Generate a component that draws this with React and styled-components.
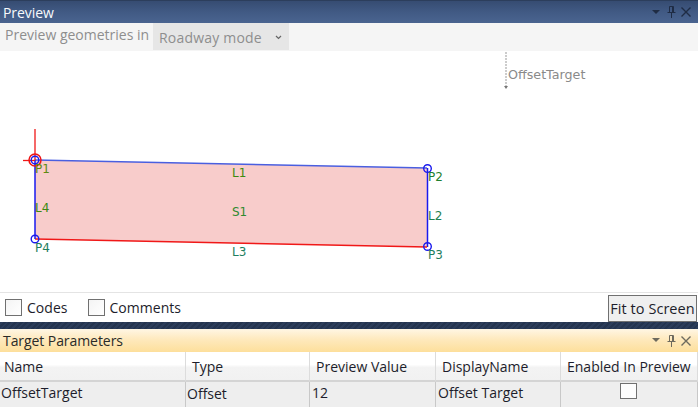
import React from "react";
import styled, { createGlobalStyle } from "styled-components";

const Global = createGlobalStyle`
  html, body { margin: 0; padding: 0; background: #2b3d5b; }
  body { font-family: "Open Sans", "Noto Sans", "Liberation Sans", sans-serif; font-size: 13px; }
  #root { width: 698px; height: 407px; overflow: hidden; }
`;

const Page = styled.div`
  width: 698px; height: 407px; display: flex; flex-direction: column; overflow: hidden;
  background: repeating-linear-gradient(135deg, #2b3c5a 0 2px, #24344f 2px 4px);
`;
const TitleBar = styled.div`
  height: 23px; flex: none; display: flex; align-items: center; justify-content: space-between;
  padding: 0 7px 0 3px; box-sizing: border-box;
  color: ${p => p.$active ? "#2a2a28" : "#f8fafd"};
  font-size: 14px; letter-spacing: -0.07px;
  background: ${p => p.$active
    ? "linear-gradient(#fff6e4 0%, #fee9bd 45%, #fddf9b 100%)"
    : "linear-gradient(#364c72 0%, #415a84 50%, #4a6490 100%)"};
  border-top: ${p => p.$active ? "0" : "1px solid #2c3e5c"};
  border-radius: ${p => p.$active ? "2px 2px 0 0" : "0"};
`;
const Title = styled.span`line-height: 1; padding-top: 1px;`;
const Controls = styled.div`display: flex; align-items: center; gap: 5px; color: ${p => p.$color};`;
const Toolbar = styled.div`
  height: 28px; flex: none; display: flex; background: #f5f5f5; color: #8e8e8e;
  font-size: 14px;
`;
const ToolLabel = styled.span`padding: 2px 0 0 5px; width: 148px; white-space: nowrap; box-sizing: border-box; line-height: 20px;`;
const Select = styled.div`
  width: 136px; height: 27px; background: #e6e6e6; display: flex; align-items: center;
  justify-content: space-between; box-sizing: border-box; padding: 2px 7px 0 6px; margin-left: 5px;
  letter-spacing: 0.2px;
`;
const Canvas = styled.div`height: 241px; flex: none; background: #fff; display: flex;`;
const Drawing = styled.svg`display: block; width: 698px; height: 241px;
  text { font-family: "DejaVu Sans", sans-serif; font-size: 12px; }
`;
const OptionsBar = styled.div`
  height: 30px; flex: none; background: #fff; border-top: 1px solid #e4e4e4; box-sizing: border-box;
  display: flex; align-items: center; padding-left: 5px; color: #1d1d2b; font-size: 14px;
`;
const Box = styled.span`
  display: inline-block; box-sizing: border-box; width: 17px; height: 17px; flex: none;
  border: 1px solid #707070; background: linear-gradient(135deg, #f4f4f4, #fff);
`;
const Option = styled.label`
  display: flex; align-items: center; gap: 5px; margin-right: 20px; line-height: 1; letter-spacing: 0.03px;
`;
const FitButton = styled.button`
  margin-left: auto; width: 89px; height: 27px; box-sizing: border-box; align-self: flex-start;
  margin-top: 2px; margin-right: 1px; padding: 0; background: #efefef; border: 1px solid #707070;
  color: #1d1d2b; font: inherit; font-size: 14.5px; letter-spacing: 0.05px;
`;
const Gap = styled.div`height: 7px; flex: none;`;
const Panel = styled.div`flex: 1; display: flex; flex-direction: column; background: #eee;`;
const Grid = styled.div`
  display: grid; grid-template-columns: 186px 124px 126px 125px 1fr; grid-template-rows: 30px 1fr; flex: 1;
  font-size: 14px; color: #1d1d2b;
`;
const Head = styled.div`
  box-sizing: border-box; padding: 1px 0 0 ${p => p.$pad}px; display: flex; align-items: center;
  background: linear-gradient(#fff 0%, #fff 45%, #f3f3f3 55%, #f1f1f1 100%);
  border-right: 1px solid #dcdcdc; border-bottom: 2px solid #d4d4d4; white-space: nowrap;
  &:last-of-type { border-right: 0; }
`;
const Cell = styled.div`
  box-sizing: border-box; padding: ${p => p.$top}px 0 0 ${p => p.$pad}px; background: #eee;
  border-right: 1px solid #c8c8c8; line-height: 20px; white-space: nowrap;
  display: flex; justify-content: ${p => p.$center ? "center" : "flex-start"}; align-items: flex-start;
`;
const EnabledBox = styled(Box)`background: #fdfdfd; height: 16px; margin-right: 2px;`;

const Menu = () => (
  <svg width="11" height="7" viewBox="0 0 11 7"><path d="M1 1h8L5 5z" fill="currentColor" /></svg>
);
const Pin = () => (
  <svg width="9" height="12" viewBox="0 0 9 12" fill="none" stroke="currentColor"><path d="M2.5.5h4v6h-4zM5.5 1v5M.5 6.5h8M4.5 7v5" /></svg>
);
const Close = () => (
  <svg width="10" height="10" viewBox="0 0 10 10" fill="none" stroke="currentColor" strokeWidth="1.4"><path d="M.5.5l9 9M9.5.5l-9 9" /></svg>
);
const Chevron = () => (
  <svg width="7" height="5" viewBox="0 0 7 5" fill="none" stroke="#666" strokeWidth="1.2"><path d="M1 1l2.5 2.5L6 1" /></svg>
);

const labels = [
  ["P1", 35, 173, "#5f8a10"], ["P2", 428, 181, "#1f7f2f"], ["P3", 428, 259, "#1f8060"], ["P4", 35, 252, "#1f8060"],
  ["L1", 232, 177, "#3c8a10"], ["L2", 428, 220, "#1f7f50"], ["L3", 232, 256, "#1f7f60"], ["L4", 35, 212, "#3c8a10"],
  ["S1", 232, 216, "#2f8a2f"],
];

const WinControls = ({ color }) => (
  <Controls $color={color}><Menu /><Pin /><Close /></Controls>
);

export default function App() {
  return (
    <Page>
      <Global />
      <TitleBar><Title>Preview</Title><WinControls color="#1f2c44" /></TitleBar>
      <Toolbar>
        <ToolLabel>Preview geometries in</ToolLabel>
        <Select>Roadway mode<Chevron /></Select>
      </Toolbar>
      <Canvas>
        <Drawing viewBox="0 51 698 241">
          <polygon points="35,160 427,168 427,247 35,239" fill="#f8cccb" />
          <line x1="35" y1="160" x2="427" y2="168" stroke="#4a5fe0" strokeWidth="1.4" />
          <line x1="427.5" y1="168" x2="427.5" y2="247" stroke="#1a1aee" strokeWidth="1.5" />
          <line x1="427" y1="247" x2="35" y2="239" stroke="#f01818" strokeWidth="1.5" />
          <line x1="35" y1="239" x2="35" y2="160" stroke="#1a1aee" strokeWidth="1.5" />
          <line x1="35" y1="129" x2="35" y2="160" stroke="#f01818" strokeWidth="1.3" />
          <line x1="23" y1="160.5" x2="35" y2="160.5" stroke="#f01818" strokeWidth="1.3" />
          <circle cx="35" cy="160" r="6" fill="none" stroke="#ee1515" strokeWidth="1.5" />
          <circle cx="35" cy="160" r="3.8" fill="none" stroke="#1a1aee" strokeWidth="1.4" />
          <circle cx="427.5" cy="168.5" r="3.8" fill="none" stroke="#1a1aee" strokeWidth="1.4" />
          <circle cx="427.5" cy="246.5" r="3.8" fill="none" stroke="#1a1aee" strokeWidth="1.4" />
          <circle cx="35" cy="239" r="3.8" fill="none" stroke="#1a1aee" strokeWidth="1.4" />
          {labels.map(([t, x, y, c]) => <text key={t} x={x} y={y} fill={c}>{t}</text>)}
          <line x1="506" y1="52" x2="506" y2="87" stroke="#999" strokeDasharray="2 1" />
          <path d="M504 86l2 3 2-3z" fill="#777" />
          <text x="508" y="79" fill="#8a8a8a" style={{ fontSize: 12.7 }}>OffsetTarget</text>
        </Drawing>
      </Canvas>
      <OptionsBar>
        <Option><Box />Codes</Option>
        <Option><Box />Comments</Option>
        <FitButton>Fit to Screen</FitButton>
      </OptionsBar>
      <Gap />
      <Panel>
        <TitleBar $active><Title>Target Parameters</Title><WinControls color="#6d6a5e" /></TitleBar>
        <Grid>
          <Head $pad={4}>Name</Head>
          <Head $pad={6}>Type</Head>
          <Head $pad={6}>Preview Value</Head>
          <Head $pad={6}>DisplayName</Head>
          <Head $pad={6}>Enabled In Preview</Head>
          <Cell $pad={1} $top={1}>OffsetTarget</Cell>
          <Cell $pad={1} $top={2}>Offset</Cell>
          <Cell $pad={2} $top={1}>12</Cell>
          <Cell $pad={2} $top={1}>Offset Target</Cell>
          <Cell $center $pad={0} $top={1}><EnabledBox /></Cell>
        </Grid>
      </Panel>
    </Page>
  );
}
